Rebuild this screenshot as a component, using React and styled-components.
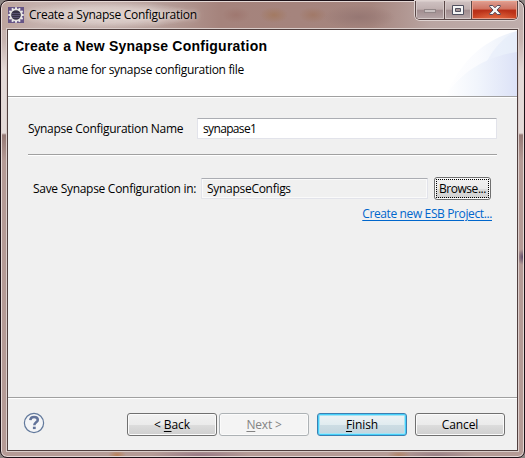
import React from "react";
import styled, { createGlobalStyle, css } from "styled-components";

const Global = createGlobalStyle`
  * { box-sizing: border-box; }
  html, body { margin: 0; width: 525px; height: 458px; overflow: hidden; background: #8d8583; }
`;

const Window = styled.div`
  width: 525px;
  height: 458px;
  position: relative;
  display: flex;
  flex-direction: column;
  padding: 2px 6px 6px 5px;
  border: 1px solid #1d1218;
  border-radius: 8px 8px 7px 7px;
  box-shadow: inset 0 0 0 1px #e5d8d5;
  background:
    radial-gradient(ellipse 6px 8px at 522px 256px, #5d4a68, transparent),
    radial-gradient(ellipse 90px 14px at 105px 14px, #e0d4d0 0, #dccfcbcc 55%, transparent 100%),
    radial-gradient(ellipse 9px 5px at 116px 454px, #b98058, transparent),
    radial-gradient(ellipse 12px 5px at 398px 454px, #b08468, transparent),
    radial-gradient(ellipse 50px 5px at 200px 454px, #987985, transparent),
    radial-gradient(ellipse 40px 5px at 435px 454px, #987f85, transparent),
    radial-gradient(ellipse 14px 8px at 273px 14px, #a37a62, transparent),
    radial-gradient(ellipse 14px 8px at 312px 14px, #a17968, transparent),
    radial-gradient(ellipse 14px 8px at 235px 14px, #9f7870, transparent),
    radial-gradient(ellipse 36px 12px at 358px 16px, #967773, transparent),
    linear-gradient(90deg, #bda49e 0, #c5b1ad 40px, #b9a29d 150px, #a5837c 220px, #a5857e 370px, #baa5a2 430px, #bfaeac 525px) 0 0 / 100% 29px no-repeat,
    linear-gradient(#c4b0ac 0, #c7b4b0 40px, #e4dad8 70px, #e4dad8 132px, #967a76 134px, #b59b96 160px, #b59b96 100%);
  font-family: "Open Sans", "Noto Sans", sans-serif;
  font-size: 12px;
  color: #000;
`;

const TitleBar = styled.div`
  height: 26px;
  flex: none;
  display: flex;
  align-items: flex-start;
`;

const AppIcon = styled.svg`
  margin: 4px 0 0 2px;
  width: 16px;
  height: 16px;
  flex: none;
`;

const Label = styled.span`
  white-space: pre;
  letter-spacing: ${(p) => p.$spacing ?? -0.29}px;
  line-height: 16px;
`;

const Title = styled(Label)`
  margin: 4px 0 0 5px;
  text-shadow: 0 0 5px #e6d9d5, 0 0 8px #e2d5d1;
`;

const Captions = styled.div`
  margin: -2px 0 0 auto;
  height: 19px;
  width: 103px;
  display: flex;
  border: 1px solid #5a4747;
  border-top: 0;
  border-radius: 0 0 5px 5px;
  box-shadow: 0 0 0 1px #dfd3d1;
  overflow: hidden;
`;

const CaptionButton = styled.div`
  width: ${(p) => p.$width}px;
  display: flex;
  align-items: center;
  justify-content: center;
  box-shadow: inset 0 0 0 1px ${(p) => (p.$close ? "#e9a08c" : "#d6cac9")};
  border-left: ${(p) => (p.$first ? "0" : "1px solid #5a4747")};
  background: ${(p) =>
    p.$close
      ? "radial-gradient(ellipse 60% 60% at 50% 110%, #e8714a, transparent), linear-gradient(#dd9d91 0, #cf7260 45%, #b82f18 50%, #c8401f 100%)"
      : "linear-gradient(#cfc2c2 0, #bfafaf 46%, #a18d8f 50%, #b6a6a7 100%)"};
`;

const Client = styled.div`
  flex: 1;
  width: 511px;
  margin-left: 1px;
  display: flex;
  flex-direction: column;
  border: 1px solid #51403f;
  box-shadow: 0 0 0 1px #dacdca;
  background: #f0f0f0;
`;

const Header = styled.div`
  height: 67px;
  flex: none;
  display: flex;
  justify-content: space-between;
  background: #fff;
  border-bottom: 1px solid #a0a0a0;
  box-shadow: 0 1px #fff;
`;

const HeaderText = styled.div`
  display: flex;
  flex-direction: column;
`;

const Heading = styled(Label)`
  font: bold 14px/16px "Liberation Sans", Arial, sans-serif;
  margin: 8px 0 0 6px;
`;

const Description = styled(Label)`
  margin: 8px 0 0 14px;
`;

const Swoosh = styled.svg`
  width: 80px;
  height: 66px;
  display: block;
`;

const Form = styled.div`
  flex: 1;
  display: flex;
  flex-direction: column;
  padding: 21px 20px 0;
`;

const Row = styled.div`
  display: flex;
  align-items: center;
`;

const NameLabel = styled(Label)`
  width: 169px;
`;

const SaveLabel = styled(Label)`
  width: 168px;
`;

const Field = styled.div`
  width: ${(p) => p.$width}px;
  height: 21px;
  display: flex;
  align-items: center;
  padding-left: 5px;
  border: 1px solid #e2e3ea;
  border-top-color: #abadb3;
  border-radius: 1px;
  background: ${(p) => (p.$readOnly ? "#f0f0f0" : "#fff")};
  box-shadow: ${(p) => (p.$readOnly ? "inset 0 0 0 1px #fafafa" : "none")};
`;

const Divider = styled.div`
  height: 2px;
  margin: 15px 0 21px;
  border-top: 1px solid #a0a0a0;
  background: #fff;
`;

const variants = {
  normal: css`
    border-color: #707070;
    box-shadow: inset 0 0 0 1px #fbfbfb;
    background: linear-gradient(#f2f2f2 0, #ebebeb 50%, #dddddd 51%, #cfcfcf 100%);
    color: #000;
  `,
  disabled: css`
    border-color: #adb2b5;
    box-shadow: inset 0 0 0 1px #fbfbfb;
    background: #f4f4f4;
    color: #838383;
  `,
  primary: css`
    border-color: #3c7fb1;
    box-shadow: inset 0 0 0 1px #46d0fa, inset 0 0 0 2px #a5e3f5;
    background: linear-gradient(#eef3f5 0, #e1ecf0 50%, #cddde4 51%, #c3d5de 100%);
    color: #000;
  `,
};

const Button = styled.div`
  width: ${(p) => p.$width || 90}px;
  height: 23px;
  flex: none;
  display: flex;
  align-items: center;
  justify-content: center;
  border: 1px solid;
  border-radius: 3px;
  ${(p) => variants[p.$variant || "normal"]}
`;

const FocusRing = styled.div`
  width: 53px;
  height: 19px;
  display: flex;
  align-items: center;
  justify-content: center;
  border: 1px dotted #000;
`;

const Link = styled(Label)`
  align-self: flex-end;
  margin: 6px 5px 0 0;
  color: #0066cc;
  text-decoration: underline;
  text-underline-offset: 2px;
`;

const Mnemonic = styled.span`
  text-decoration: underline;
  text-underline-offset: 2px;
`;

const Footer = styled.div`
  height: 53px;
  flex: none;
  display: flex;
  align-items: flex-start;
  padding: 15px 12px 0 15px;
  border-top: 1px solid #a0a0a0;
  box-shadow: inset 0 1px #fff;
`;

const HelpIcon = styled.svg`
  width: 22px;
  height: 22px;
  margin: -1px 82px 0 0;
`;

const Gap = styled.div`
  width: ${(p) => p.$width}px;
  flex: none;
`;

const teeth = Array.from({ length: 12 }, (_, i) => i * 30);

export default function App() {
  return (
    <>
      <Global />
      <Window>
        <TitleBar>
          <AppIcon viewBox="0 0 16 16">
            <rect width="16" height="16" fill="#665486" />
            {teeth.map((a) => (
              <rect key={a} x="7" y="0.3" width="2" height="3" fill="#eee" transform={`rotate(${a} 8 8)`} />
            ))}
            <circle cx="8" cy="8" r="5.6" fill="#353044" stroke="#e6e3e2" strokeWidth="1.6" />
            <path d="M4 6.5h8M3.5 8.5h9M4.2 10.5h7.6" stroke="#5d5676" strokeWidth="0.9" />
          </AppIcon>
          <Title $spacing={-0.27}>Create a Synapse Configuration</Title>
          <Captions>
            <CaptionButton $width={28} $first>
              <svg width="12" height="6" viewBox="0 0 12 6">
                <rect x="0.5" y="2.5" width="11" height="3" fill="#c9c0c0" stroke="#938788" />
              </svg>
            </CaptionButton>
            <CaptionButton $width={27}>
              <svg width="12" height="10" viewBox="0 0 12 10">
                <path d="M.5 .5h11v9H.5z" fill="#f5f5f5" stroke="#50505f" />
                <path d="M3.5 3.5h5v3h-5z" fill="#a99798" stroke="#50505f" />
              </svg>
            </CaptionButton>
            <CaptionButton $width={46} $close>
              <svg width="12" height="10" viewBox="0 0 12 10">
                <path d="M.7.5h3.1L6 2.8 8.2.5h3.1v1L8 5l3.3 3.5v1H8.2L6 7.2 3.8 9.5H.7v-1L4 5 .7 1.5z" fill="#f6f6f6" stroke="#564a5a" />
              </svg>
            </CaptionButton>
          </Captions>
        </TitleBar>
        <Client>
          <Header>
            <HeaderText>
              <Heading $spacing={0.24}>Create a New Synapse Configuration</Heading>
              <Description $spacing={-0.31}>Give a name for synapse configuration file</Description>
            </HeaderText>
            <Swoosh viewBox="0 0 80 66">
              <defs>
                <linearGradient id="outer" x1="0" x2="1">
                  <stop offset="0" stopColor="#fff" />
                  <stop offset="0.45" stopColor="#fafbfe" />
                  <stop offset="1" stopColor="#eaf0fa" />
                </linearGradient>
                <linearGradient id="inner" x1="0" x2="1">
                  <stop offset="0" stopColor="#fff" />
                  <stop offset="0.45" stopColor="#f1f5fc" />
                  <stop offset="1" stopColor="#dce2f7" />
                </linearGradient>
              </defs>
              <path d="M8 66C22 35 45 9 80 1V66z" fill="url(#outer)" />
              <path d="M38 66C43 40 56 12 80 1V66z" fill="#e4ebf9" opacity="0.55" />
              <path d="M8 66C25 41 50 26 80 22V66z" fill="url(#inner)" />
            </Swoosh>
          </Header>
          <Form>
            <Row>
              <NameLabel>Synapse Configuration Name</NameLabel>
              <Field $width={300}><Label $spacing={-0.65}>synapase1</Label></Field>
            </Row>
            <Divider />
            <Row>
              <Gap $width={5} />
              <SaveLabel>Save Synapse Configuration in:</SaveLabel>
              <Field $width={227} $readOnly><Label>SynapseConfigs</Label></Field>
              <Gap $width={6} />
              <Button $width={57}><FocusRing><Label $spacing={-0.45}>Browse...</Label></FocusRing></Button>
            </Row>
            <Link $spacing={-0.38}>Create new ESB Project...</Link>
          </Form>
          <Footer>
            <HelpIcon viewBox="0 0 22 22">
              <circle cx="11" cy="11" r="9.6" fill="#f4f5f7" stroke="#62799c" strokeWidth="1.2" />
              <path d="M7.3 8.2C7.5 5.7 9 5.1 11 5.1c2.3 0 3.8 1 3.8 2.9 0 2.4-3.5 2.4-3.5 5.3" fill="none" stroke="#62739a" strokeWidth="2.5" />
              <rect x="9.9" y="14.7" width="2.8" height="2.4" fill="#62739a" />
            </HelpIcon>
            <Button><Label $spacing={-0.1}>{"< "}<Mnemonic>B</Mnemonic>ack</Label></Button>
            <Gap $width={2} />
            <Button $variant="disabled"><Label $spacing={-0.2}><Mnemonic>N</Mnemonic>{"ext >"}</Label></Button>
            <Gap $width={8} />
            <Button $variant="primary"><Label $spacing={-0.1}><Mnemonic>F</Mnemonic>inish</Label></Button>
            <Gap $width={8} />
            <Button><Label $spacing={-0.1}>Cancel</Label></Button>
          </Footer>
        </Client>
      </Window>
    </>
  );
}
